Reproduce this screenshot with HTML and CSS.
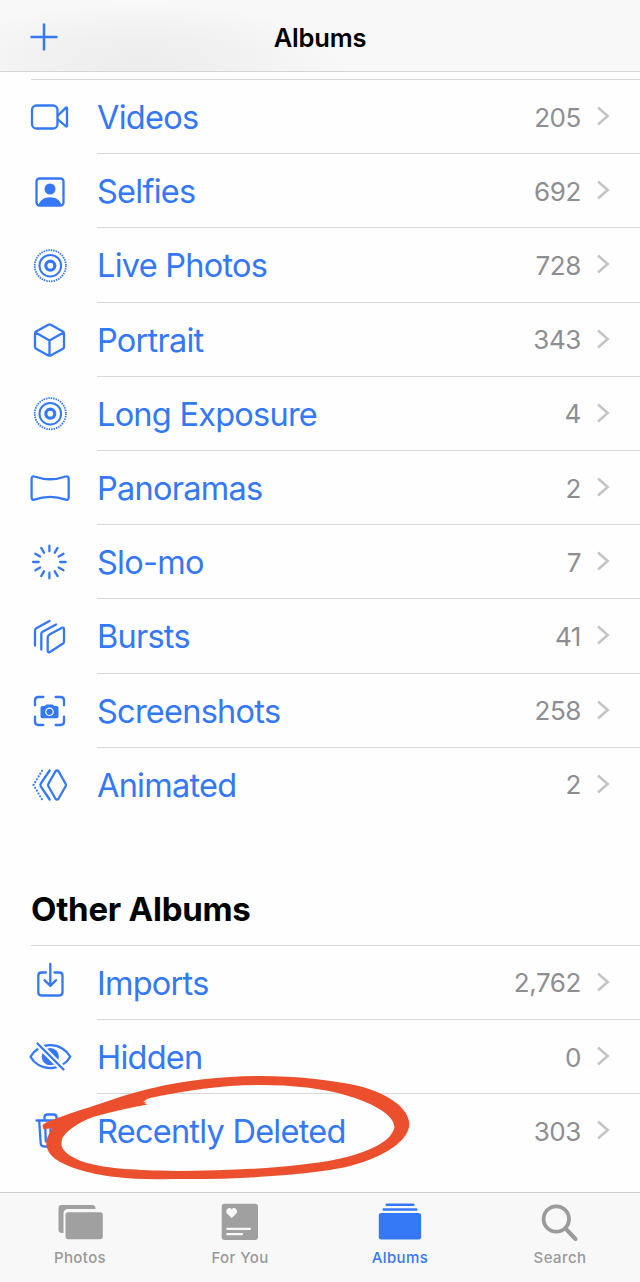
FILE: index.html
```html
<!DOCTYPE html>
<html lang="en">
<head>
<meta charset="utf-8">
<title>Albums</title>
<link rel="stylesheet" href="styles.css">
</head>
<body>
<svg width="0" height="0" class="defs" aria-hidden="true">
  <symbol id="chevron" viewBox="0 0 14 22"><path d="M2 2.5 11.7 11 2 19.5" fill="none" stroke="#c4c4c7" stroke-width="2.5"/></symbol>
  <symbol id="live" viewBox="0 0 48 48"><g fill="none" stroke="#3478f6" stroke-linecap="butt"><circle cx="24.3" cy="24.7" r="15.6" stroke-width="1.8" stroke-dasharray="1.5 .95"/><circle cx="24.3" cy="24.7" r="10.8" stroke-width="2"/><circle cx="24.3" cy="24.7" r="4.5" stroke-width="3.2"/></g></symbol>
</svg>
<div class="screen">
  <header class="navbar">
    <svg class="plus" viewBox="0 0 28 28"><path d="M14 .5v27M.5 14h27" stroke="#3478f6" stroke-width="2.5"/></svg>
    <h1 class="title">Albums</h1>
  </header>
  <main class="content">
    <ul class="list">
      <li class="row"><svg class="icon" viewBox="0 0 48 48"><rect x="6" y="13.5" width="25.5" height="23" rx="4.5"/><path d="M32 23.5 39.7 15.9Q41 14.8 41 16.5V33.5Q41 35.2 39.7 34.1L32 27.5"/></svg><div class="body"><span class="label">Videos</span><span class="count">205</span><svg class="chev"><use href="#chevron"/></svg></div></li>
      <li class="row"><svg class="icon" viewBox="0 0 48 48"><rect x="10.5" y="11.500" width="27" height="27" rx="3"/><circle class="solid" cx="24" cy="22" r="5.500"/><path class="solid" d="M12.500 38C14 33 18.500 30.300 24 30.300S34 33 35.500 38Z"/></svg><div class="body"><span class="label">Selfies</span><span class="count">692</span><svg class="chev"><use href="#chevron"/></svg></div></li>
      <li class="row"><svg class="icon"><use href="#live"/></svg><div class="body"><span class="label">Live Photos</span><span class="count">728</span><svg class="chev"><use href="#chevron"/></svg></div></li>
      <li class="row"><svg class="icon" viewBox="0 0 48 48"><path d="M22.300 9.800Q23.500 9.100 24.700 9.800L36.900 16.500Q38 17.200 38 18.500V32Q38 33 36.900 33.700L24.700 40.400Q23.500 41 22.300 40.400L10.100 33.700Q9 33 9 32V18.500Q9 17.200 10.100 16.500ZM9.500 17.500 23.500 25.500 37.500 17.500M23.500 25.500V40.500"/></svg><div class="body"><span class="label">Portrait</span><span class="count">343</span><svg class="chev"><use href="#chevron"/></svg></div></li>
      <li class="row"><svg class="icon"><use href="#live"/></svg><div class="body"><span class="label">Long Exposure</span><span class="count">4</span><svg class="chev"><use href="#chevron"/></svg></div></li>
      <li class="row"><svg class="icon" viewBox="0 0 48 48"><path d="M8.300 13.500Q24 19 39.700 13.500Q42.700 12.800 42.700 16V34Q42.700 37.700 39.700 36.600Q24 31.200 8.300 36.600Q5.600 37.700 5.600 34V16Q5.600 12.800 8.300 13.500Z"/></svg><div class="body"><span class="label">Panoramas</span><span class="count">2</span><svg class="chev"><use href="#chevron"/></svg></div></li>
      <li class="row"><svg class="icon" viewBox="0 0 48 48"><path d="M23.400 8.700v5.600M23.400 35.700v5.600M7.100 25h5.600M34.100 25h5.600M15.200 10.900l2.800 4.800M28.800 34.300l2.800 4.800M31.600 10.900l-2.800 4.800M18 34.300l-2.800 4.800M9.300 16.800l4.800 2.800M32.700 30.400l4.800 2.800M37.500 16.800l-4.800 2.800M14.100 30.400l-4.800 2.800"/></svg><div class="body"><span class="label">Slo-mo</span><span class="count">7</span><svg class="chev"><use href="#chevron"/></svg></div></li>
      <li class="row"><svg class="icon" viewBox="0 0 48 48"><path d="M9 33.500V18.500Q9 17 10.300 16.200L23.500 9M15.300 37.500V22Q15.300 20.500 16.600 19.800L30 12.500M23.500 22.500 35.500 15.900Q38 14.800 38 17.500V29.500Q38 31 36.700 31.800L24.300 39.800Q21.700 41.200 21.700 38.500V25.500Q21.700 23.500 23.500 22.500Z"/></svg><div class="body"><span class="label">Bursts</span><span class="count">41</span><svg class="chev"><use href="#chevron"/></svg></div></li>
      <li class="row"><svg class="icon" viewBox="0 0 48 48"><path d="M9 19.300V14.500Q9 11 12.500 11H17.300M29.700 11H34.500Q38 11 38 14.500V19.300M38 30.700V35.500Q38 39 34.500 39H29.700M17.300 39H12.500Q9 39 9 35.500V30.700"/><path class="solid" d="M16.300 20H18.800L20.300 18.400H26.700L28.200 20H30.700Q32.500 20 32.500 21.800V30.500Q32.500 32.300 30.700 32.300H16.300Q14.500 32.300 14.500 30.500V21.800Q14.500 20 16.300 20Z"/><circle class="lens" cx="23.500" cy="25.800" r="3.700"/></svg><div class="body"><span class="label">Screenshots</span><span class="count">258</span><svg class="chev"><use href="#chevron"/></svg></div></li>
      <li class="row last"><svg class="icon" viewBox="0 0 48 48"><path d="M29.500 11.300Q31 9.400 32.500 11.300L39.600 23.700Q40.300 25 39.600 26.300L32.500 38.700Q31 40.600 29.500 38.700L22.400 26.300Q21.700 25 22.400 23.700ZM23.600 10.500 14.800 23.700Q14 25 14.800 26.300L23.600 39.500"/><path class="dots" d="M16 10.800 7.500 25 16 39.500"/></svg><div class="body"><span class="label">Animated</span><span class="count">2</span><svg class="chev"><use href="#chevron"/></svg></div></li>
    </ul>
    <h2 class="section">Other Albums</h2>
    <ul class="list">
      <li class="row"><svg class="icon" viewBox="0 0 48 48"><path d="M20 14.500H15.500Q12.300 14.500 12.300 17.700V34.300Q12.300 37.500 15.500 37.500H33.300Q36.500 37.500 36.500 34.300V17.700Q36.500 14.500 33.300 14.500H28.500M24.300 6V27.500M18.500 22.200 24.300 27.800 30.100 22.200"/></svg><div class="body"><span class="label">Imports</span><span class="count">2,762</span><svg class="chev"><use href="#chevron"/></svg></div></li>
      <li class="row"><svg class="icon" viewBox="0 0 48 48"><path d="M4.500 24.700C8 18.200 15.500 13.200 24.300 13.200S40.600 18.200 44.300 24.700C40.600 31.200 33.100 36.200 24.300 36.200S8 31.200 4.500 24.700Z"/><circle class="solid" cx="24.300" cy="24.700" r="8.600"/><path class="gap" d="M11.500 11.500 37.500 37.500"/><path d="M11.500 11.500 37.500 37.500"/></svg><div class="body"><span class="label">Hidden</span><span class="count">0</span><svg class="chev"><use href="#chevron"/></svg></div></li>
      <li class="row last"><svg class="icon" viewBox="0 0 48 48"><path d="M10.500 13.500H38.500M18.500 13V10.300Q18.500 7.500 21.300 7.500H27.700Q30.500 7.500 30.500 10.300V13M13.200 14 14.700 36.500Q15 39.500 18 39.500H31Q34 39.500 34.300 36.500L35.800 14M19.200 18.500 19.800 34.500M24.500 18.500V34.500M29.800 18.500 29.200 34.500"/></svg><div class="body"><span class="label">Recently Deleted</span><span class="count">303</span><svg class="chev"><use href="#chevron"/></svg></div>
        <svg class="marker" viewBox="40 1070 380 115"><path fill="#eb4f2d" fill-rule="evenodd" d="M43 1128L42.500 1125 46 1122.500C57 1118 71 1113 87 1108C110 1100.500 130 1093 153 1088C185 1080 225 1076 260 1076C296 1076 332 1080 359 1086C389 1094 408 1108 409.300 1123C410 1141 383 1157 350 1166C317 1174 250 1179 190 1179C158 1179 137 1180 116 1177C88 1174 63 1166 53 1157C45 1149 45 1142 48.500 1135L52 1128.300 43.500 1129.300ZM148.500 1101.500L144 1103 147.500 1104.500C128 1108 110 1112 93 1117C78 1123 65 1131 61.500 1140C59 1150 70 1158 87 1163C110 1169 135 1170 175 1171C235 1171 300 1167 338 1159C370 1152 392 1141 394.500 1127C394 1116 377 1105 350 1096.500C324 1088 291 1085 260 1085C225 1085 187 1090 148 1098.500L143 1102Z"/></svg></li>
    </ul>
  </main>
  <nav class="tabbar">
    <div class="tab"><svg class="tabicon" viewBox="0 0 48 42"><path d="M5.500 4H36Q39.500 4 39.500 7.500V8H12Q7.500 8 7.500 12.500V32H6Q2.500 32 2.500 28.500V7Q2.500 4 5.500 4Z"/><rect x="9.500" y="11.200" width="37.300" height="27" rx="2.500"/></svg><span>Photos</span></div>
    <div class="tab"><svg class="tabicon" viewBox="0 0 48 42"><rect x="5.700" y="2.700" width="36.300" height="36.300" rx="3"/><path fill="#f8f8f8" d="M15.700 17 11.200 12.700C8.500 9.500 13 4.700 15.700 8.500C18.400 4.700 23 9.500 20.200 12.700Z"/><path d="M11.300 27.800H34M11.300 33.200H26" stroke="#f8f8f8" stroke-width="2.200" stroke-linecap="round"/></svg><span>For You</span></div>
    <div class="tab active"><svg class="tabicon" viewBox="0 0 48 42"><rect x="9.500" y="2.500" width="29" height="2.500" rx="1.200"/><rect x="6.500" y="7.200" width="35" height="2.500" rx="1.200"/><rect x="2.800" y="12" width="42.300" height="26.500" rx="2.500"/></svg><span>Albums</span></div>
    <div class="tab"><svg class="tabicon" viewBox="0 0 48 42"><g fill="none" stroke="#9b9b9b"><circle cx="20.300" cy="18" r="12.700" stroke-width="3.800"/><path d="M29.500 27.500 39.500 38" stroke-width="4" stroke-linecap="round"/></g></svg><span>Search</span></div>
  </nav>
</div>
</body>
</html>
```
FILE: styles.css
```css
* { box-sizing: border-box; }
body { margin: 0; background: #fefefe; font-family: Inter, "Liberation Sans", sans-serif; }
.defs { position: absolute; }
.screen { width: 640px; height: 1282px; display: flex; flex-direction: column; overflow: hidden; }
.navbar { height: 72px; flex: none; display: grid; grid-template-columns: 1fr auto 1fr; align-items: center; padding: 3px 30px 0; border-bottom: 1px solid #d4d4d4; background: radial-gradient(ellipse 200px 60px at 140px 62px, #ededed 0%, #f0f0f0 40%, #f8f8f8 100%); }
.plus { width: 28px; height: 28px; }
.title { margin: 0; padding-top: 2px; font-size: 25.5px; line-height: 32px; font-weight: 600; color: #000; letter-spacing: -.2px; }
.content { flex: 1; min-height: 0; padding-top: 7px; }
.list { list-style: none; margin: 0 0 0 31px; padding: 0; border-top: 1px solid #d9d9db; }
.row { position: relative; height: 74.2px; display: flex; align-items: center; }
.icon { width: 48px; height: 48px; margin: -1.5px 23px 0 -5px; flex: none; fill: none; stroke: #3478f6; stroke-width: 2.3; stroke-linecap: round; stroke-linejoin: round; }
.icon .solid { fill: #3478f6; stroke: none; }
.icon .dots { stroke-width: 2.2; stroke-dasharray: 0 3.3; }
.icon .lens { stroke: #fff; stroke-width: 1.2; }
.icon .gap { stroke: #fefefe; stroke-width: 6.5; }
.body { flex: 1; height: 100%; display: flex; align-items: center; border-bottom: 1px solid #d9d9db; padding-right: 30px; padding-top: 2px; }
.last .body { border-bottom-color: transparent; }
.label { flex: 1; padding-top: 1px; font-size: 32.5px; line-height: 40px; letter-spacing: -.75px; color: #3478f6; white-space: nowrap; }
.count { font-size: 26px; line-height: 34px; letter-spacing: -.4px; color: #8e8e92; }
.chev { width: 14px; height: 22px; margin-left: 15px; margin-top: -3px; }
.section { margin: 66px 0 0 31px; height: 57px; font-size: 33px; line-height: 40px; letter-spacing: -.25px; font-weight: 700; color: #000; padding-top: 1px; }
.marker { position: absolute; left: 9px; top: -24px; width: 380px; height: 115px; }
.tabbar { height: 90px; flex: none; display: flex; border-top: 1px solid #cdcdcd; background: #f8f8f8; }
.tab { flex: 1; display: flex; flex-direction: column; align-items: center; padding-top: 8px; fill: #a0a0a0; color: #999; font-size: 15px; line-height: 20px; font-weight: 500; letter-spacing: .4px; }
.tab span { margin-top: 5px; }
.tabicon { width: 48px; height: 42px; }
.active { fill: #3478f6; color: #3478f6; }
```
